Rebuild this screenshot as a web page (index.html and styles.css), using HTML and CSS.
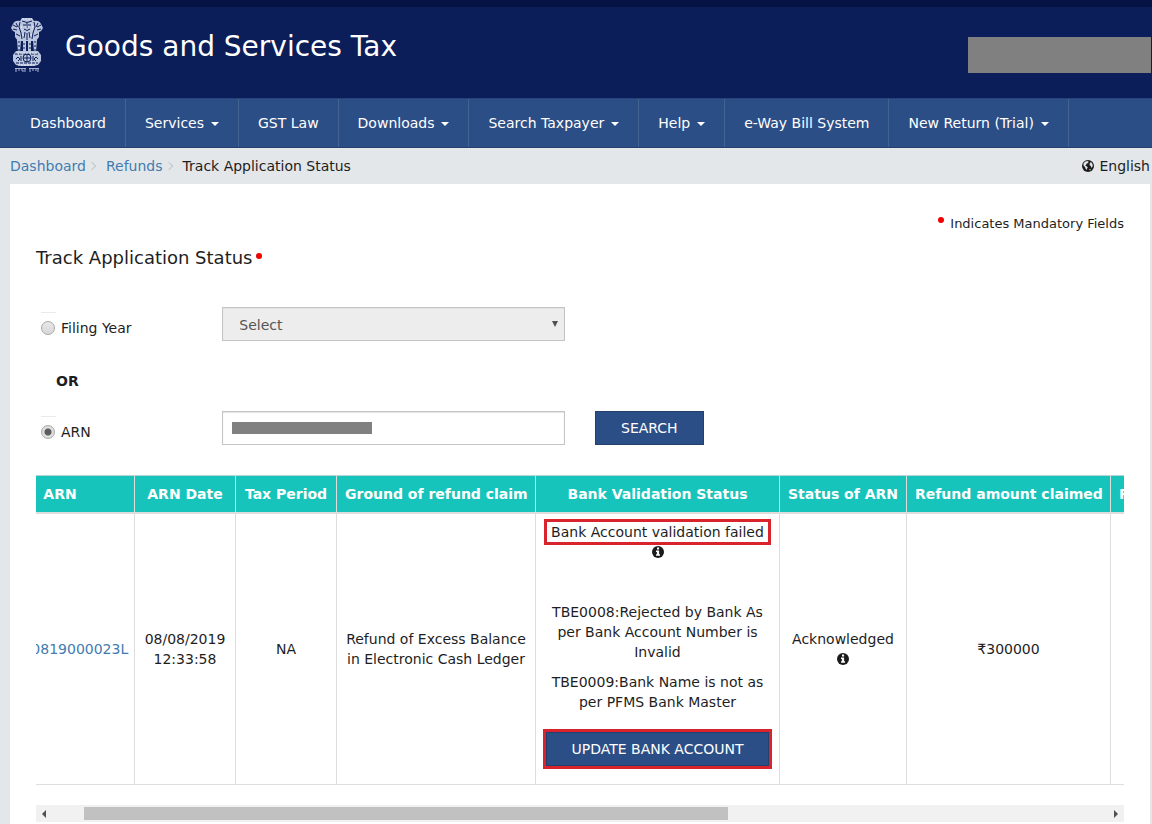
FILE: index.html
```html
<!DOCTYPE html>
<html lang="en">
<head>
    <meta charset="UTF-8">
    <meta name="viewport" content="width=device-width, initial-scale=1.0">
    <title>Goods and Services Tax - Track Application Status</title>
    <link rel="stylesheet" href="styles.css">
</head>
<body>

<svg class="sprite" aria-hidden="true">
    <symbol id="icon-info" viewBox="0 0 12 12">
        <circle cx="6" cy="6" r="6" fill="#1b1b1b"/>
        <path d="M5 1.500h2.100v1.900H5zM4 4.600h3.100v3.600H8v1.500H4V8.200h.9V6H4z" fill="#fff"/>
    </symbol>
</svg>

<header class="header">
    <svg class="emblem" viewBox="0 0 34 56" role="img" aria-label="National emblem">
        <g fill="#bcc5de">
            <path d="M12 1h10l2 3q5-1 7 3l2 4-2 3-2 1v5l-3 4H8l-3-4v-5l-2-1-2-3 2-4q2-4 7-3z"/>
            <path d="M7 23h4l-1 12H8zM13 24h3v11h-3zM18 24h3v11h-3zM23 23h4l-1 12h-2z"/>
            <path d="M6 34h22l3 4v6l-3 4-5 1H11l-5-1-3-4v-6z"/>
        </g>
        <g fill="none" stroke="#0b1e59" stroke-width="1">
            <path d="M12 4q5 3 10 0M13 8h3M18 8h3M17 6v5M14 12q3 3 6 0M10 5l-1 5 2 6 1 6M24 5l1 5-2 6-1 6M3 8l4 2M31 8l-4 2M3 12l4 1M31 12l-4 1M6 6l2 4M28 6l-2 4M6 17l4 2M28 17l-4 2M15 15l-1 6M19 15l1 6M17 16v7"/>
            <path d="M5 37h24M6 46h22" stroke-dasharray="3 1"/>
            <path d="M6 42l2-2 2 2-2 2M28 42l-2-2-2 2 2 2M11 39v5M23 39v5"/>
            <circle cx="17" cy="41" r="4"/>
            <path d="M17 37v8M13 41h8"/>
            <path d="M9 24v10M14 26v8M20 26v8M25 24v10" stroke-dasharray="2 2"/>
        </g>
        <g fill="none" stroke="#e4e9f5" stroke-width="1">
            <path d="M12 2h10M11 9l1 4M23 9l-1 4M15 10h4M13 17v3M21 17v3M7 36h20M8 48h18" stroke-dasharray="2 1"/>
        </g>
        <path d="M5 51.500h11M19 51.500h10M6 52v3M9 52v2M11 53h2v2M15 52v3M20 52v3M23 52v2M25 53h2M28 52v3" fill="none" stroke="#aab4d2" stroke-width="1"/>
    </svg>
    <h1 class="site-name">Goods and Services Tax</h1>
    <div class="user-block"></div>
</header>

<nav class="navbar">
    <a class="nav-item" href="#">Dashboard</a>
    <a class="nav-item" href="#">Services<span class="caret"></span></a>
    <a class="nav-item" href="#">GST Law</a>
    <a class="nav-item" href="#">Downloads<span class="caret"></span></a>
    <a class="nav-item" href="#">Search Taxpayer<span class="caret"></span></a>
    <a class="nav-item" href="#">Help<span class="caret"></span></a>
    <a class="nav-item" href="#">e-Way Bill System</a>
    <a class="nav-item" href="#">New Return (Trial)<span class="caret"></span></a>
</nav>

<div class="topbar">
    <div class="breadcrumb">
        <a href="#">Dashboard</a><span class="chevron"></span>
        <a href="#">Refunds</a><span class="chevron"></span>
        <span>Track Application Status</span>
    </div>
    <div class="language">
        <svg width="12" height="12" viewBox="0 0 12 12" aria-hidden="true">
            <circle cx="6" cy="6" r="6" fill="#1b1b1b"/>
            <path d="M1.500 3.500L3 1.800 5.500 1 6.800 2 5.500 3.200 4.500 3.800 4 5l-1 .3 1.500 1 1.200 1L5 8.800l-.5 1.200L3.500 8.500 3 7 1.500 5.500zM8 2.500l1.500 0L10.800 5l-.3 1.500L9.500 8 8.800 6 7.500 5zM7 9.500l2-.5-1 1.500z" fill="#e4e7ea"/>
        </svg>
        English
    </div>
</div>

<main class="content">
    <p class="mandatory"><span class="dot"></span>Indicates Mandatory Fields</p>
    <h2 class="page-title">Track Application Status<span class="dot"></span></h2>

    <form class="search-form">
        <div class="form-row">
            <div class="radio">
                <input type="radio" name="searchBy" id="byYear">
                <label for="byYear">Filing Year</label>
            </div>
            <div class="field select-box">
                <select id="year" aria-label="Filing Year" disabled>
                    <option>Select</option>
                </select>
            </div>
        </div>
        <p class="or">OR</p>
        <div class="form-row">
            <div class="radio">
                <input type="radio" name="searchBy" id="byArn" checked>
                <label for="byArn">ARN</label>
            </div>
            <div class="field arn-box">
                <input type="text" id="arn" aria-label="ARN">
                <span class="masked"></span>
            </div>
            <button class="btn" type="button">SEARCH</button>
        </div>
    </form>

    <div class="table-scroll" id="tableScroll">
        <table class="status-table">
            <colgroup>
                <col class="col-arn">
                <col class="col-date">
                <col class="col-period">
                <col class="col-ground">
                <col class="col-bank">
                <col class="col-status">
                <col class="col-amount">
                <col class="col-rest">
            </colgroup>
            <thead>
                <tr>
                    <th>ARN</th>
                    <th>ARN Date</th>
                    <th>Tax Period</th>
                    <th>Ground of refund claim</th>
                    <th>Bank Validation Status</th>
                    <th>Status of ARN</th>
                    <th>Refund amount claimed</th>
                    <th class="last">Refund amount sanctioned</th>
                </tr>
            </thead>
            <tbody>
                <tr>
                    <td><a href="#">AA070819000023L</a></td>
                    <td>08/08/2019 12:33:58</td>
                    <td>NA</td>
                    <td>Refund of Excess Balance in Electronic Cash Ledger</td>
                    <td>
                        <span class="failed">Bank Account validation failed</span>
                        <svg class="info" width="12" height="12"><use href="#icon-info"/></svg>
                        <p class="first-error">TBE0008:Rejected by Bank As per Bank Account Number is Invalid</p>
                        <p>TBE0009:Bank Name is not as per PFMS Bank Master</p>
                        <button class="btn btn-update" type="button">UPDATE BANK ACCOUNT</button>
                    </td>
                    <td>Acknowledged <svg class="info" width="12" height="12"><use href="#icon-info"/></svg></td>
                    <td>₹300000</td>
                    <td></td>
                </tr>
            </tbody>
        </table>
    </div>
    <div class="scrollbar">
        <span class="arrow arrow-left"></span>
        <div class="track"><div class="thumb"></div></div>
        <span class="arrow arrow-right"></span>
    </div>
</main>

<script>
    document.getElementById("tableScroll").scrollLeft = 50;
</script>

</body>
</html>
```

FILE: styles.css
```css
* {
    box-sizing: border-box;
}
body {
    margin: 0;
    background-color: #e4e7ea;
    color: #1e1e1e;
    font-family: Verdana, "DejaVu Sans", sans-serif;
    font-size: 14px;
    line-height: 20px;
    overflow-x: hidden;
}
a {
    color: #417cb0;
    text-decoration: none;
}
p {
    margin: 0 0 10px;
}
.sprite {
    display: none;
}
.header {
    display: flex;
    align-items: flex-start;
    height: 98px;
    padding: 10px 1px 0 10px;
    border-top: 7px solid #041344;
    background-color: #0b1e59;
}
.emblem {
    width: 34px;
    height: 56px;
}
.site-name {
    flex: 1;
    margin: 12px 0 0 21px;
    color: #fff;
    font-size: 28px;
    font-weight: normal;
    line-height: 36px;
}
.user-block {
    width: 183px;
    height: 36px;
    margin-top: 20px;
    background-color: #808080;
}
.navbar {
    display: flex;
    height: 50px;
    padding-left: 11px;
    border-top: 1px solid #27457c;
    border-bottom: 1px solid #24406f;
    background-color: #2c4e86;
}
.nav-item {
    display: flex;
    align-items: center;
    padding: 0 19px;
    border-right: 1px solid #456391;
    color: #fff;
    white-space: nowrap;
}
.caret {
    margin: 2px 0 0 7px;
    border: 4px solid transparent;
    border-top-color: #fff;
    border-bottom: 0;
}
.topbar {
    display: flex;
    justify-content: space-between;
    padding: 8px 2px 8px 10px;
}
.breadcrumb {
    display: flex;
    align-items: center;
}
.chevron {
    width: 6px;
    height: 6px;
    margin: 0 11px 0 3px;
    border: solid #c4c8cc;
    border-width: 1px 1px 0 0;
    transform: rotate(45deg);
}
.language {
    display: flex;
    align-items: center;
    gap: 5px;
}
.content {
    margin: 0 2px 0 10px;
    padding: 30px 26px 2px;
    background-color: #fff;
}
.dot {
    display: inline-block;
    width: 6px;
    height: 6px;
    border-radius: 50%;
    background-color: #f00000;
    vertical-align: 5px;
}
.mandatory {
    margin: 0;
    font-size: 13px;
    text-align: right;
}
.mandatory .dot {
    margin-right: 6px;
}
.page-title {
    margin: 12px 0 37px;
    font-size: 18px;
    font-weight: normal;
    line-height: 24px;
}
.page-title .dot {
    margin-left: 4px;
}
.form-row {
    display: grid;
    grid-template-columns: repeat(12, 1fr);
    column-gap: 30px;
}
.radio {
    grid-column: span 2;
    display: flex;
    align-items: center;
    gap: 6px;
    position: relative;
    height: 34px;
    padding: 8px 0 0 5px;
}
.radio::before {
    content: "";
    position: absolute;
    top: 5px;
    left: 5px;
    width: 15px;
    border-top: 1px solid #eaeaea;
}
.radio input {
    appearance: none;
    width: 14px;
    height: 14px;
    margin: 0;
    border: 1px solid #a8a8a8;
    border-radius: 50%;
    background: linear-gradient(#e8e8e8, #d8d8d8);
}
.radio input:checked {
    background: radial-gradient(circle, #5c5c5c 3px, #dedede 4px);
}
.field {
    grid-column: span 4;
    display: flex;
    position: relative;
}
.field select,
.field input {
    appearance: none;
    width: 100%;
    height: 34px;
    padding: 1px 16px 0;
    border: 1px solid #c4c4c4;
    border-radius: 0;
    background-color: #fff;
    box-shadow: inset 0 1px 1px #e3e3e3;
    color: #555;
    font: inherit;
}
.field select {
    background-color: #ededed;
    opacity: 1;
}
.select-box::after {
    content: "";
    position: absolute;
    top: 14px;
    right: 7px;
    border: 3px solid transparent;
    border-top: 6px solid #505050;
    border-bottom: 0;
}
.masked {
    position: absolute;
    top: 11px;
    left: 10px;
    width: 140px;
    height: 12px;
    background-color: #808080;
}
.or {
    margin: 30px 20px 20px;
    font-weight: bold;
}
.btn {
    height: 34px;
    padding: 0 25px;
    border: 1px solid #24406f;
    background-color: #2c4e86;
    color: #fff;
    font: inherit;
    white-space: nowrap;
    cursor: pointer;
}
.form-row .btn {
    grid-column: span 2;
    justify-self: start;
}
.table-scroll {
    margin-top: 30px;
    padding-bottom: 20px;
    overflow-x: auto;
    scrollbar-width: none;
}
.status-table {
    width: 1775px;
    table-layout: fixed;
    border-collapse: separate;
    border-spacing: 0;
}
.col-arn {
    width: 149px;
}
.col-date,
.col-period {
    width: 101px;
}
.col-ground {
    width: 199px;
}
.col-bank {
    width: 244px;
}
.col-status {
    width: 127px;
}
.col-amount {
    width: 204px;
}
.status-table th,
.status-table td {
    padding: 8px;
    border-right: 1px solid #ddd;
    border-bottom: 1px solid #ddd;
    text-align: center;
}
.status-table th {
    border-top: 1px solid #b5d5d3;
    border-bottom-width: 2px;
    background-color: #17c4bb;
    color: #fff;
    white-space: nowrap;
}
.status-table th.last {
    text-align: left;
}
.info {
    vertical-align: -1px;
}
.failed {
    display: inline-block;
    padding: 0 4px;
    outline: 3px solid #d9232d;
}
.first-error {
    margin-top: 40px;
}
.btn-update {
    width: calc(100% - 4px);
    margin: 10px 0;
    padding: 0;
    outline: 3px solid #d9232d;
}
.scrollbar {
    display: flex;
    align-items: center;
    justify-content: space-between;
    height: 17px;
    padding: 0 6px;
    background-color: #f1f1f1;
}
.track {
    flex: 1;
    margin: 0 6px;
}
.thumb {
    width: 61%;
    height: 13px;
    margin-left: 3%;
    background-color: #c1c1c1;
}
.arrow {
    border: 4px solid transparent;
}
.arrow-left {
    border-right-color: #505050;
    border-left: 0;
}
.arrow-right {
    border-left-color: #505050;
    border-right: 0;
}
```
